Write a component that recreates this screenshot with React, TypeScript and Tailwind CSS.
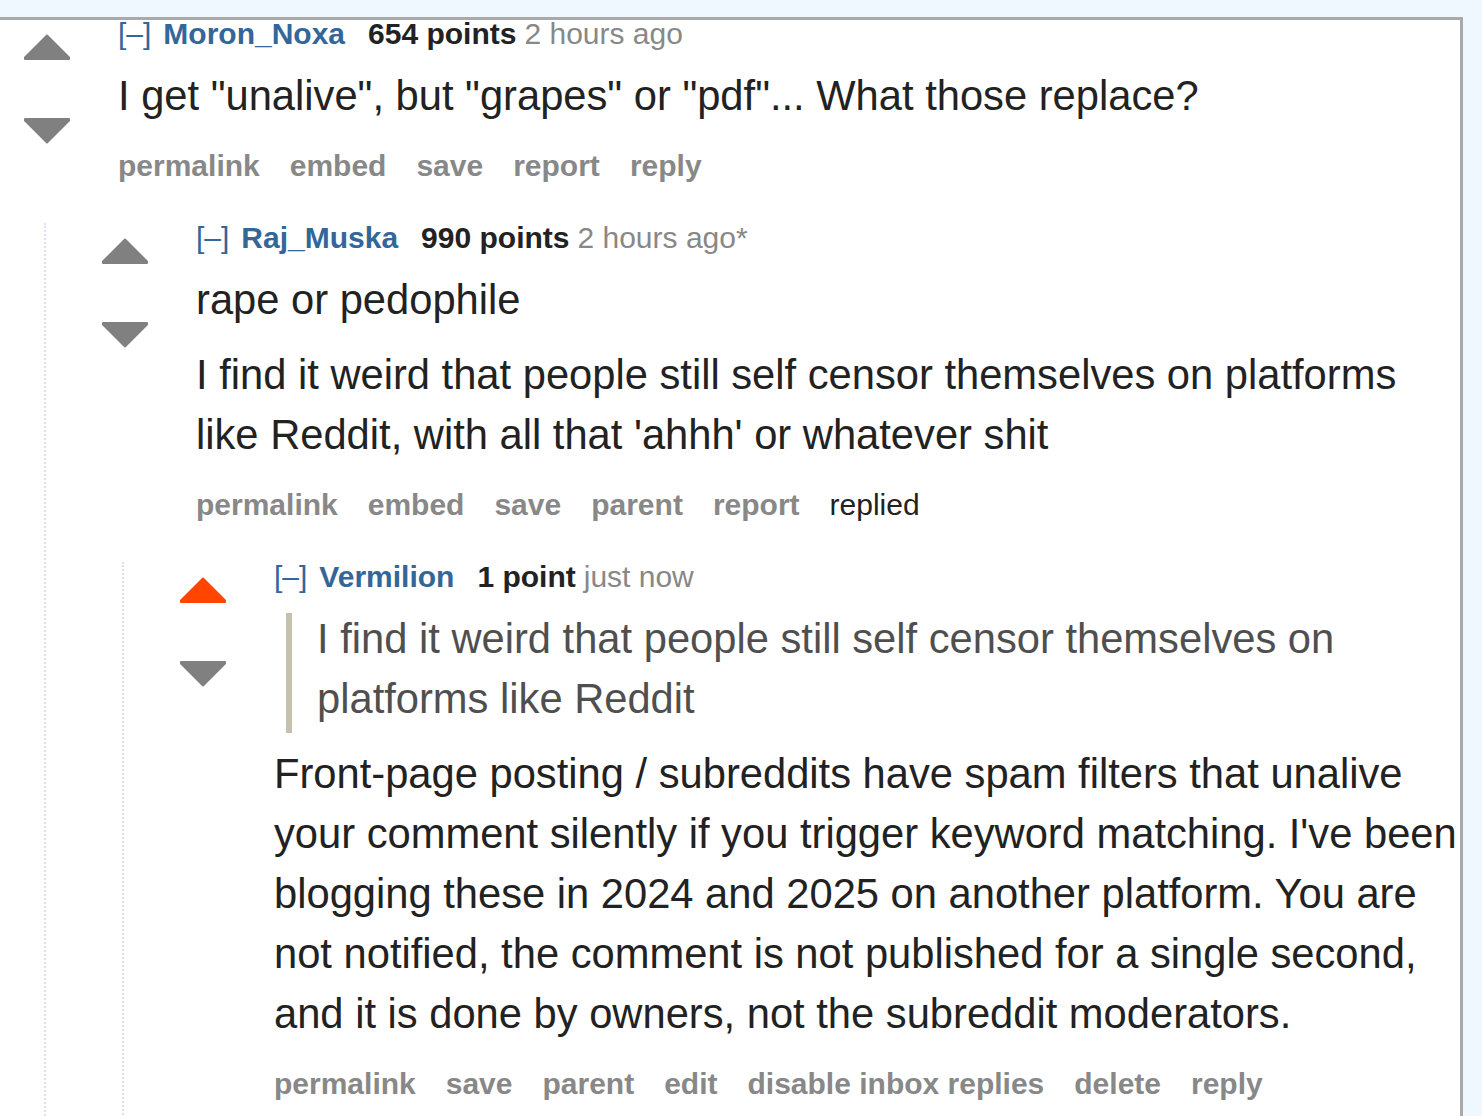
import React from 'react'

type Btn = { label: string; plain?: boolean }

type Block = { kind: 'p' | 'quote'; text: string }

interface CommentData {
  author: string
  points: string
  time: string
  upvoted?: boolean
  body: Block[]
  buttons: Btn[]
}

function Arrow({ down, active }: { down?: boolean; active?: boolean }) {
  const fill = active ? '#ff4500' : '#808080'
  return (
    <svg
      width="48"
      height="28"
      viewBox="0 0 48 28"
      className={down ? 'block rotate-180' : 'block'}
      aria-hidden
    >
      <polygon
        points="24,2.5 46,24.5 46,26 2,26 2,24.5"
        fill={fill}
        stroke={fill}
        strokeWidth="2"
        strokeLinejoin="round"
      />
    </svg>
  )
}

function Comment({ c, children }: { c: CommentData; children?: React.ReactNode }) {
  return (
    <div>
      <div className="flex">
        {/* vote arrows */}
        <div className="w-[48px] shrink-0 mr-[47px] pt-[14px] flex flex-col gap-[56px]">
          <Arrow active={c.upvoted} />
          <Arrow down />
        </div>

        <div className="flex-1 min-w-0">
          {/* tagline */}
          <div className="flex items-baseline text-[30px] leading-[30px] whitespace-nowrap">
            <span className="text-[#369] mr-[12px]">[–]</span>
            <span className="text-[#369] font-bold mr-[23px]">{c.author}</span>
            <span className="text-[#222] font-bold">{c.points}</span>
            <span className="text-[#888] ml-[8px]">{c.time}</span>
          </div>

          {/* body */}
          <div className="flow-root mt-[17px] -mr-[6px] text-[41.7px] leading-[60px] text-[#222]">
            {c.body.map((b, i) =>
              b.kind === 'quote' ? (
                <blockquote
                  key={i}
                  className="flow-root mt-[4px] mb-[11px] ml-[12px] border-l-[6px] border-[#c5c1ad] pl-[25px] text-[#4f4f4f]"
                >
                  <p className="-mt-[4px] mb-[4px]">{b.text}</p>
                </blockquote>
              ) : (
                <p key={i} className="mb-[15px]">
                  {b.text}
                </p>
              )
            )}
          </div>

          {/* buttons */}
          <ul className="mt-[10px] flex gap-[30px] text-[30px] leading-[30px] whitespace-nowrap">
            {c.buttons.map((b) => (
              <li
                key={b.label}
                className={b.plain ? 'text-[#222]' : 'font-bold text-[#888]'}
              >
                {b.label}
              </li>
            ))}
          </ul>
        </div>
      </div>

      {children && (
        <div className="mt-[42px] ml-[21px] border-l-2 border-dotted border-[#ddddff] pl-[55px] pb-[80px]">
          {children}
        </div>
      )}
    </div>
  )
}

const first: CommentData = {
  author: 'Moron_Noxa',
  points: '654 points',
  time: '2 hours ago',
  body: [{ kind: 'p', text: 'I get "unalive", but "grapes" or "pdf"... What those replace?' }],
  buttons: [
    { label: 'permalink' },
    { label: 'embed' },
    { label: 'save' },
    { label: 'report' },
    { label: 'reply' },
  ],
}

const second: CommentData = {
  author: 'Raj_Muska',
  points: '990 points',
  time: '2 hours ago*',
  body: [
    { kind: 'p', text: 'rape or pedophile' },
    {
      kind: 'p',
      text: "I find it weird that people still self censor themselves on platforms like Reddit, with all that 'ahhh' or whatever shit",
    },
  ],
  buttons: [
    { label: 'permalink' },
    { label: 'embed' },
    { label: 'save' },
    { label: 'parent' },
    { label: 'report' },
    { label: 'replied', plain: true },
  ],
}

const third: CommentData = {
  author: 'Vermilion',
  points: '1 point',
  time: 'just now',
  upvoted: true,
  body: [
    {
      kind: 'quote',
      text: 'I find it weird that people still self censor themselves on platforms like Reddit',
    },
    {
      kind: 'p',
      text: "Front-page posting / subreddits have spam filters that unalive your comment silently if you trigger keyword matching. I've been blogging these in 2024 and 2025 on another platform. You are not notified, the comment is not published for a single second, and it is done by owners, not the subreddit moderators.",
    },
  ],
  buttons: [
    { label: 'permalink' },
    { label: 'save' },
    { label: 'parent' },
    { label: 'edit' },
    { label: 'disable inbox replies' },
    { label: 'delete' },
    { label: 'reply' },
  ],
}

export default function App() {
  return (
    <div className="h-[1116px] overflow-hidden bg-[#eff7ff] font-['Liberation_Sans',Arial,sans-serif]">
      <div className="mt-[17px] w-[1463px] h-[1099px] overflow-hidden border-t-[3px] border-r-[3px] border-[#a9a9a9] bg-white pl-[23px]">
        <div className="-mt-[1px]">
          <Comment c={first}>
            <Comment c={second}>
              <Comment c={third} />
            </Comment>
          </Comment>
        </div>
      </div>
    </div>
  )
}
